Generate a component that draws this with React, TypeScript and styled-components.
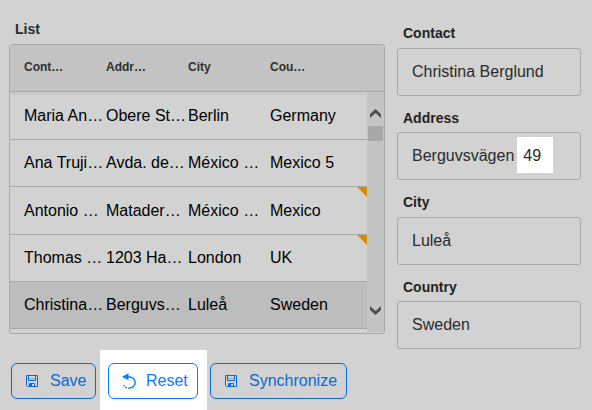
import React from "react";
import styled, { createGlobalStyle } from "styled-components";

const GlobalStyle = createGlobalStyle`
  * { box-sizing: border-box; }
  body {
    margin: 0;
    background: #d2d2d2;
    font-family: "Liberation Sans", Arial, sans-serif;
    font-size: 16px;
  }
`;

const Page = styled.main`
  display: grid;
  grid-template-columns: 397px 184px;
  width: 592px;
  height: 410px;
  overflow: hidden;
  background: #d2d2d2;
`;

const MainColumn = styled.section`
  display: flex;
  flex-direction: column;
`;

const ListTitle = styled.h2`
  margin: 0;
  height: 44px;
  padding: 21px 0 0 15px;
  font-size: 14px;
  line-height: 16px;
  color: #2a2a2a;
`;

const Table = styled.div`
  width: 376px;
  height: 290px;
  margin-left: 9px;
  border: 1px solid #a8a8a8;
  border-radius: 3px;
  overflow: hidden;
`;

const TableHeader = styled.div`
  display: grid;
  grid-template-columns: repeat(4, 82px);
  height: 47px;
  padding-left: 14px;
  background: #c3c3c3;
  border-bottom: 1px solid #a8a8a8;
  font-size: 12px;
  font-weight: bold;
  line-height: 44px;
  color: #303030;
`;

const TableBody = styled.div`
  display: flex;
  height: 241px;
`;

const Rows = styled.div`
  width: 357px;
  background: linear-gradient(#cacaca, #cecece) 0 0 / 100% 3px no-repeat;
`;

const Row = styled.div<{ $height: number; $selected?: boolean }>`
  position: relative;
  display: grid;
  grid-template-columns: repeat(4, 82px);
  align-items: center;
  height: ${(p) => p.$height}px;
  padding-left: 14px;
  border-bottom: 1px solid #a8a8a8;
  background: ${(p) => (p.$selected ? "#bdbdbd" : "transparent")};
  color: #000;
  line-height: 18px;
  white-space: nowrap;
`;

const ChangedMark = styled.span`
  position: absolute;
  top: 0;
  right: 0;
  width: 10px;
  height: 10px;
  background: #d68b00;
  clip-path: polygon(0 0, 100% 0, 100% 100%);
`;

const Scrollbar = styled.div`
  display: flex;
  flex-direction: column;
  align-items: center;
  width: 17px;
  height: 240px;
  padding: 17px 0 17px 0;
  background: #c4c4c4;
`;

const Thumb = styled.div`
  width: 15px;
  height: 15px;
  margin: 8px 0 auto;
  background: #a8a8a8;
`;

const Actions = styled.div`
  display: flex;
  align-items: flex-start;
  height: 76px;
  padding: 16px 0 0 11px;
`;

const Spotlight = styled.div`
  width: 107px;
  height: 60px;
  padding: 13px 0 0 8px;
  margin-left: 4px;
  background: #fff;
`;

const ActionButton = styled.button<{ $width: number; $tone: string; $inset?: boolean }>`
  display: flex;
  align-items: center;
  gap: ${(p) => (p.$inset ? "9px" : "11px")};
  width: ${(p) => p.$width}px;
  height: 36px;
  margin: ${(p) => (p.$inset ? "0" : "13px 0 0")};
  padding: 0 0 1px ${(p) => (p.$inset ? "12px" : "13px")};
  border: 1px solid ${(p) => p.$tone};
  border-radius: 6px;
  background: transparent;
  color: ${(p) => p.$tone};
  font: inherit;
  line-height: 18px;
`;

const SyncSlot = styled.div`
  margin-left: 3px;
`;

const Form = styled.form`
  display: flex;
  flex-direction: column;
  padding-top: 25px;
`;

const Field = styled.label<{ $height: number }>`
  display: block;
  height: ${(p) => p.$height}px;
`;

const FieldLabel = styled.span<{ $height: number }>`
  display: block;
  height: ${(p) => p.$height}px;
  padding-left: 6px;
  font-size: 14px;
  font-weight: bold;
  line-height: 16px;
  color: #222;
`;

const FieldBox = styled.span`
  display: flex;
  align-items: center;
  height: 48px;
  padding: 0 0 0 14px;
  border: 1px solid #a8a8a8;
  border-radius: 3px;
  line-height: 18px;
  color: #2b2b2b;
`;

const Highlight = styled.span`
  width: 36px;
  height: 36px;
  margin: -2px 0 0 3px;
  padding-left: 6px;
  background: #fff;
  line-height: 38px;
`;

const ROWS = [
  { cells: ["Maria An…", "Obere St…", "Berlin", "Germany"], height: 48 },
  { cells: ["Ana Truji…", "Avda. de…", "México …", "Mexico 5"], height: 47 },
  { cells: ["Antonio …", "Matader…", "México …", "Mexico"], height: 48, changed: true },
  { cells: ["Thomas …", "1203 Ha…", "London", "UK"], height: 47, changed: true },
  { cells: ["Christina…", "Berguvs…", "Luleå", "Sweden"], height: 47, selected: true },
];

const Chevron = ({ down = false }: { down?: boolean }) => (
  <svg width="11" height="9" viewBox="0 0 11 9" fill="#505050">
    <path d={down ? "M0 0 5.5 5 11 0V4L5.5 9 0 4Z" : "M0 9 5.5 4 11 9V5L5.5 0 0 5Z"} />
  </svg>
);

const SaveIcon = () => (
  <svg width="14" height="14" viewBox="0 0 14 14" fill="none" stroke="currentColor">
    <path d="M1.5 1.5H12.5V12.5H2.5L1.5 11.5ZM3.5 1.5V6.5H10.5V1.5M4.5 12.5V9.5H9.5V12.5" />
    <path d="M4 4.5H10" strokeOpacity=".35" />
    <path d="M5 10H7V12H5Z" fill="currentColor" stroke="none" />
  </svg>
);

const ResetIcon = () => (
  <svg width="16" height="18" viewBox="0 0 16 18" fill="none">
    <path d="M6 5H8.5A5.4 5.4 0 0 1 9 15.9" stroke="currentColor" strokeWidth="1.4" />
    <path d="M9 15.9A5.4 5.4 0 0 1 2.6 13" stroke="currentColor" strokeWidth="1.4" strokeDasharray="2 1" />
    <path d="M1 4.8 7.5 1.2V8.2Z" fill="currentColor" />
  </svg>
);

export default function App() {
  return (
    <>
      <GlobalStyle />
      <Page>
        <MainColumn>
          <ListTitle>List</ListTitle>
          <Table>
            <TableHeader>
              <span>Cont…</span>
              <span>Addr…</span>
              <span>City</span>
              <span>Cou…</span>
            </TableHeader>
            <TableBody>
              <Rows>
                {ROWS.map((row) => (
                  <Row key={row.cells[0]} $height={row.height} $selected={row.selected}>
                    {row.cells.map((cell, i) => (
                      <span key={i}>{cell}</span>
                    ))}
                    {row.changed && <ChangedMark />}
                  </Row>
                ))}
              </Rows>
              <Scrollbar>
                <Chevron />
                <Thumb />
                <Chevron down />
              </Scrollbar>
            </TableBody>
          </Table>
          <Actions>
            <ActionButton $width={85} $tone="#0969d6">
              <SaveIcon />
              Save
            </ActionButton>
            <Spotlight>
              <ActionButton $width={90} $tone="#0a7cff" $inset>
                <ResetIcon />
                Reset
              </ActionButton>
            </Spotlight>
            <SyncSlot>
              <ActionButton $width={137} $tone="#0969d6">
                <SaveIcon />
                Synchronize
              </ActionButton>
            </SyncSlot>
          </Actions>
        </MainColumn>
        <Form>
          <Field $height={85}>
            <FieldLabel $height={23}>Contact</FieldLabel>
            <FieldBox>Christina Berglund</FieldBox>
          </Field>
          <Field $height={84}>
            <FieldLabel $height={22}>Address</FieldLabel>
            <FieldBox>
              Berguvsvägen <Highlight>49</Highlight>
            </FieldBox>
          </Field>
          <Field $height={85}>
            <FieldLabel $height={23}>City</FieldLabel>
            <FieldBox>Luleå</FieldBox>
          </Field>
          <Field $height={70}>
            <FieldLabel $height={22}>Country</FieldLabel>
            <FieldBox>Sweden</FieldBox>
          </Field>
        </Form>
      </Page>
    </>
  );
}
